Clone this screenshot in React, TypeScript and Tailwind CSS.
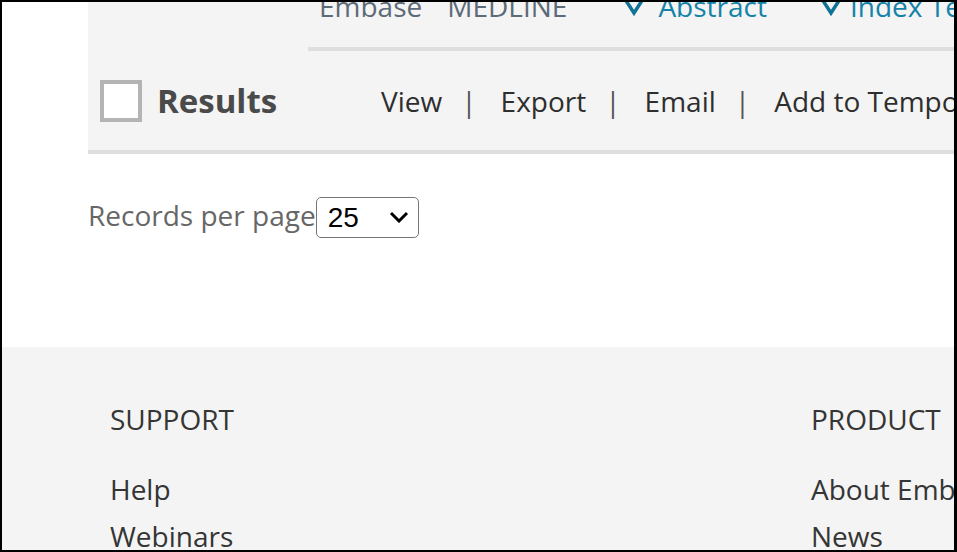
import { useState } from "react";

const font = { fontFamily: '"Open Sans", "Noto Sans", Arial, sans-serif' };

const Check = () => (
  <svg width="24" height="18" viewBox="0 0 24 18" className="shrink-0">
    <polyline
      points="1,-2 12,15 23,-2"
      fill="none"
      stroke="#0f7394"
      strokeWidth="3.5"
      strokeLinejoin="miter"
    />
  </svg>
);

const Sep = () => <span className="ml-[19px] mr-[24px] text-[#555]">|</span>;

export default function App() {
  const [perPage, setPerPage] = useState("25");

  return (
    <div
      className="w-[957px] h-[552px] box-border border-2 border-r-[3px] border-black bg-white overflow-hidden flex flex-col"
      style={font}
    >
      {/* results toolbar panel */}
      <div className="ml-[86px] w-[1000px] shrink-0 flex flex-col bg-[#f4f4f4]">
        <div className="-mt-[10px] h-[28px] flex items-end pl-[231px] text-[28px] leading-[28px] whitespace-nowrap">
          <span className="text-[#5d6a77]">Embase</span>
          <span className="ml-[25px] text-[#5d6a77]">MEDLINE</span>
          <span className="ml-[55px] flex items-end text-[#1583a8]">
            <span className="mb-[4px]"><Check /></span>
            <span className="ml-[12px]">Abstract</span>
          </span>
          <span className="ml-[52px] flex items-end text-[#1583a8]">
            <span className="mb-[4px]"><Check /></span>
            <span className="ml-[7px]">Index Terms</span>
          </span>
        </div>
        <div className="mt-[27px] ml-[220px] h-[4px] bg-[#dedede]" />
        <div className="h-[99px] flex items-center pl-[12px] whitespace-nowrap">
          <div className="w-[281px] shrink-0 flex items-center">
            <span className="w-[42px] h-[42px] shrink-0 box-border border-4 border-[#b4b4b4] bg-white" />
            <span className="ml-[15px] text-[33px] font-bold text-[#4a4a4a]">Results</span>
          </div>
          <div className="flex shrink-0 items-center text-[28px] text-[#2e2e2e]">
            <span>View</span>
            <Sep />
            <span>Export</span>
            <Sep />
            <span>Email</span>
            <Sep />
            <span>Add to Temporary Clipboard</span>
          </div>
        </div>
        <div className="h-[4px] bg-[#dedede]" />
      </div>

      {/* records per page */}
      <div className="mt-[43px] ml-[86px] flex items-start">
        <span className="text-[28px] leading-[36px] text-[#676767]">Records per page</span>
        <div className="relative">
          <select
            value={perPage}
            onChange={(e) => setPerPage(e.target.value)}
            className="appearance-none w-[103px] h-[41px] box-border border-[1.5px] border-[#767676] rounded-[5px] bg-white pl-[11px] text-[28px] leading-none text-black outline-none"
            style={{ fontFamily: '"Liberation Sans", Arial, sans-serif' }}
          >
            <option value="10">10</option>
            <option value="25">25</option>
            <option value="50">50</option>
            <option value="100">100</option>
          </select>
          <svg
            width="20"
            height="12"
            viewBox="0 0 20 12"
            className="absolute left-[73px] top-[14px] pointer-events-none"
          >
            <polyline points="2,2 10,10 18,2" fill="none" stroke="#000" strokeWidth="3" />
          </svg>
        </div>
      </div>

      {/* footer */}
      <div className="mt-[109px] flex-1 bg-[#f4f4f4] flex pl-[108px] pt-[51px] text-[28px] text-[#353535] whitespace-nowrap">
        <div className="w-[701px] shrink-0">
          <div className="leading-[42px] mb-[26px]">SUPPORT</div>
          <div className="leading-[47px]">Help</div>
          <div className="leading-[47px]">Webinars</div>
          <div className="leading-[47px]">Contact Us</div>
        </div>
        <div className="shrink-0">
          <div className="leading-[42px] mb-[26px]">PRODUCT</div>
          <div className="leading-[47px]">About Embase</div>
          <div className="leading-[47px]">News</div>
          <div className="leading-[47px]">Content</div>
        </div>
      </div>
    </div>
  );
}
